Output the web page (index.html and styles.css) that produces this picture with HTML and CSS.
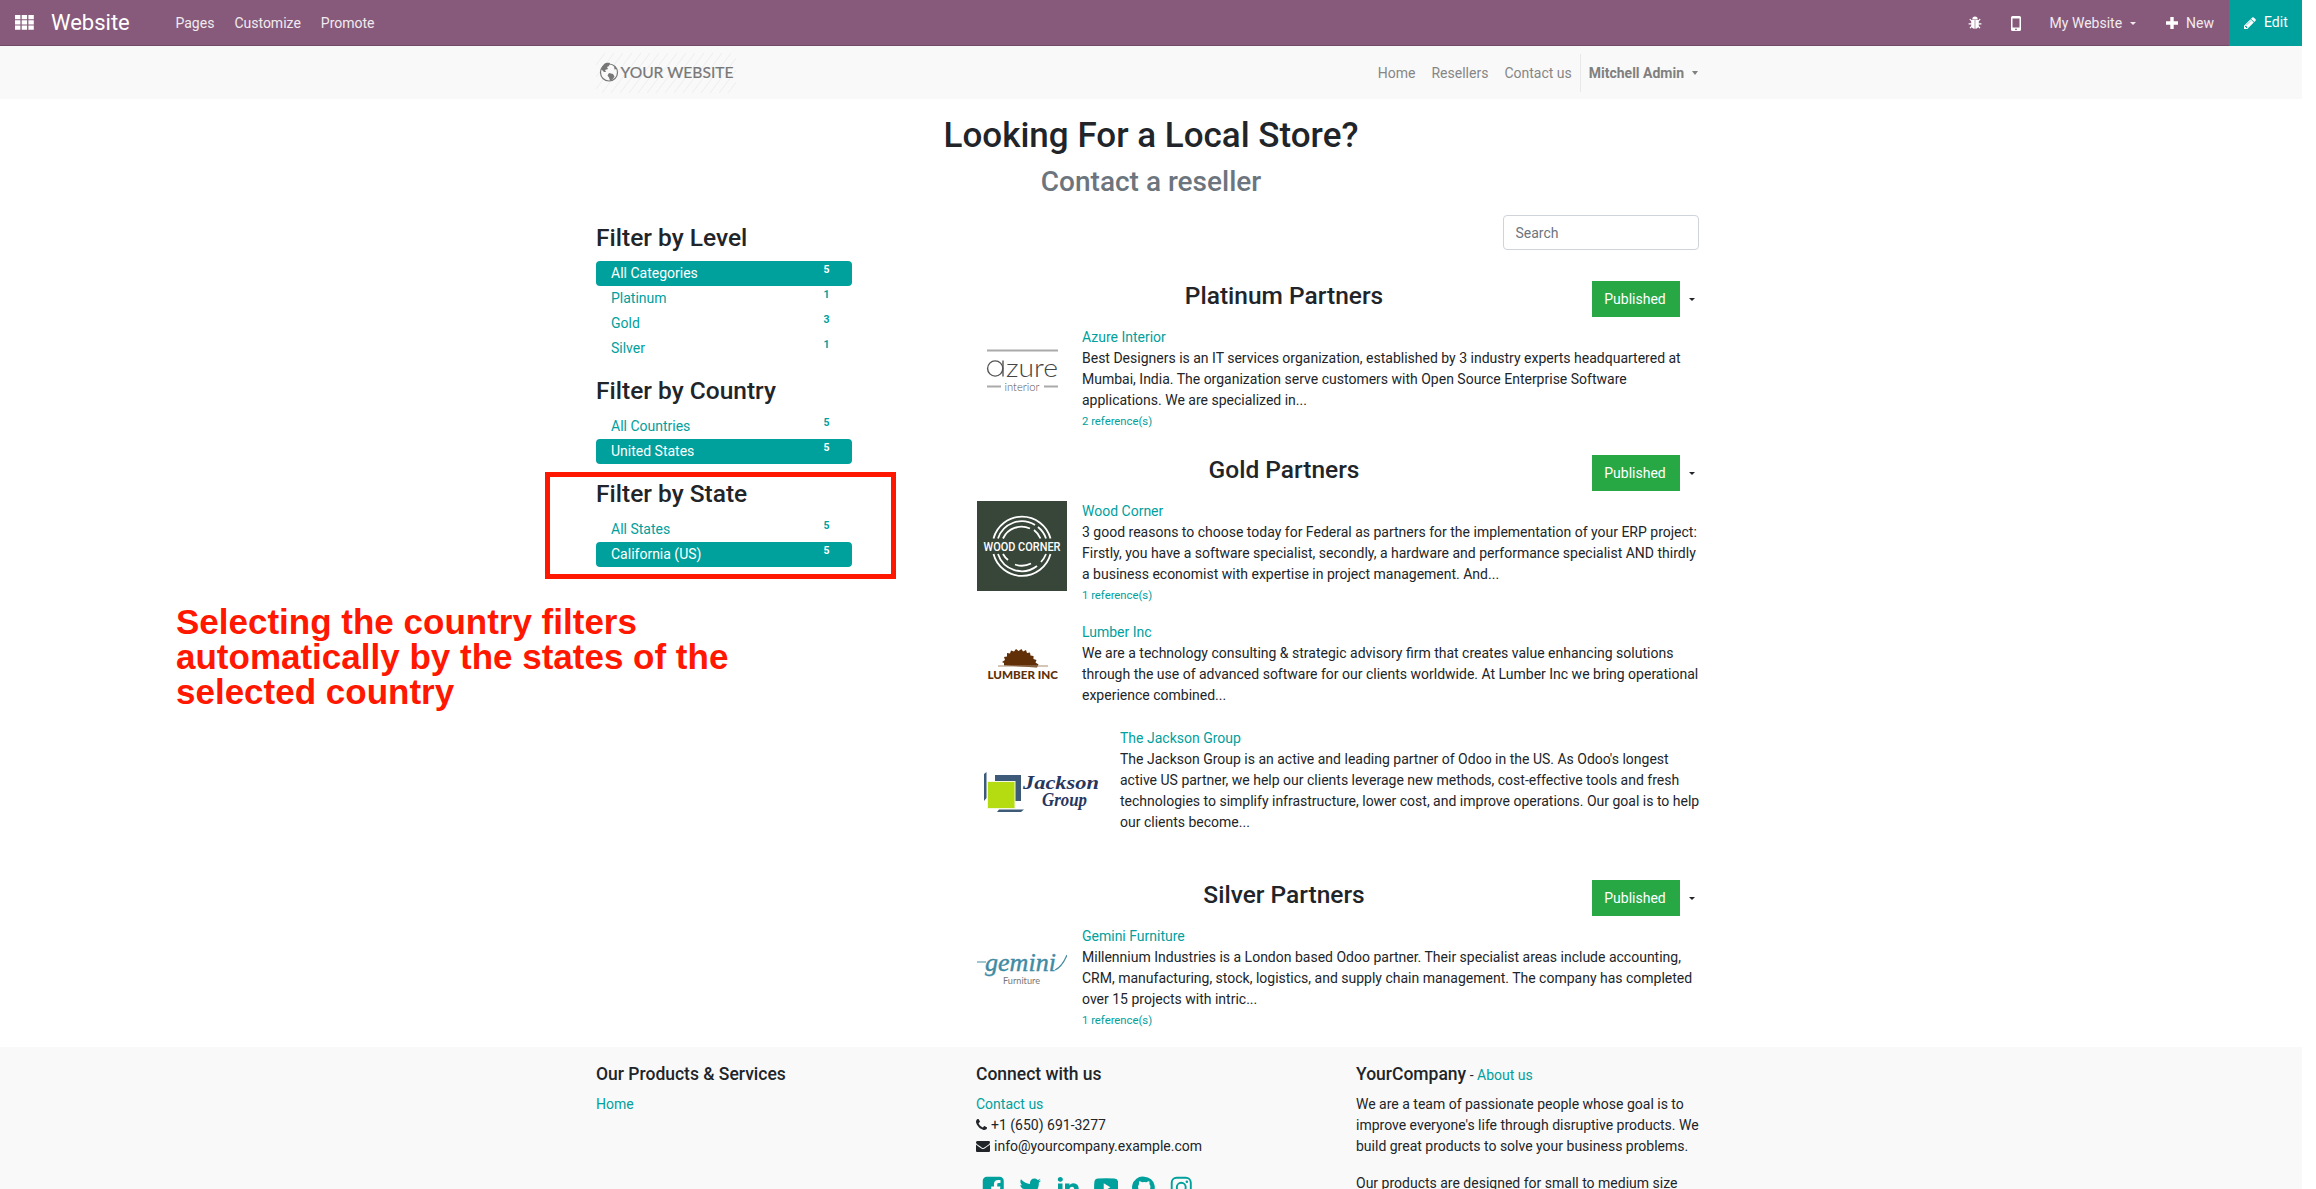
FILE: index.html
```html
<!DOCTYPE html>
<html lang="en">
<head>
<meta charset="utf-8">
<title>Resellers</title>
<link rel="stylesheet" href="styles.css">
</head>
<body>
<div class="page">
  <header class="topbar">
    <svg class="apps" viewBox="0 0 19 15"><path d="M0 0h5.4v4.2H0zM6.7 0h5.4v4.2H6.7zM13.4 0h5.4v4.2h-5.4zM0 5.3h5.4v4.2H0zM6.7 5.3h5.4v4.2H6.7zM13.4 5.3h5.4v4.2h-5.4zM0 10.6h5.4v4.2H0zM6.7 10.6h5.4v4.2H6.7zM13.4 10.6h5.4v4.2h-5.4z"/></svg>
    <span class="brand">Website</span>
    <nav class="menu"><a>Pages</a><a>Customize</a><a>Promote</a></nav>
    <div class="tools">
      <svg class="bug" viewBox="0 0 14 14"><path d="M4.300 3.400a2.700 2.800 0 0 1 5.400 0zM3.200 4h3.500v8.800C4.300 12.600 3.200 11 3.200 9zM7.300 4h3.500v5c0 2-1.100 3.600-3.500 3.800z"/><path d="M3.800 5.200L1.800 3.200M10.200 5.200l2-2M3.600 7.800H.6M10.400 7.800h3M4 10l-2 2.200M10 10l2 2.200" fill="none" stroke="#fff" stroke-width="1.200"/></svg>
      <svg class="mobile" viewBox="0 0 10 15"><path fill-rule="evenodd" d="M1.600 0h6.800A1.600 1.600 0 0 1 10 1.600v11.800A1.600 1.600 0 0 1 8.400 15H1.600A1.600 1.600 0 0 1 0 13.400V1.600A1.600 1.600 0 0 1 1.600 0zM1.500 2.400v9.200h7V2.400zM5 12.400a.9.9 0 1 0 0 1.800.9.900 0 0 0 0-1.800z"/></svg>
      <span class="site">My Website</span><i class="caret"></i>
      <svg class="plus" viewBox="0 0 12 12"><path d="M4.300 0h3.400v4.300H12v3.400H7.700V12H4.300V7.700H0V4.300h4.300z"/></svg>
      <span>New</span>
    </div>
    <a class="edit"><svg viewBox="0 0 1792 1792"><path d="M491 1536l91-91-235-235-91 91v107h128v128h107zm523-928q0-22-22-22-10 0-17 7l-542 542q-7 7-7 17 0 22 22 22 10 0 17-7l542-542q7-7 7-17zm-54-192l416 416-832 832h-416v-416zm683 96q0 53-37 90l-166 166-416-416 166-165q36-38 90-38 53 0 91 38l235 234q37 39 37 91z"/></svg>Edit</a>
  </header>

  <div class="sitenav">
    <div class="sitenav-inner">
      <svg class="sitelogo" viewBox="0 0 140 40">
        <defs><pattern id="hatch" width="9" height="12" patternUnits="userSpaceOnUse"><path d="M0 12L9 0" stroke="#ececec" stroke-width=".9"/></pattern></defs>
        <rect width="140" height="40" fill="url(#hatch)"/>
        <circle cx="13" cy="19.500" r="8.500" fill="#f9f9f9" stroke="#777" stroke-width="1.200"/>
        <path fill="#777" d="M6 14c2-4 4-5 8-4l-1 3-2 1 1 2-3 1 1 2-2 0-2-2-1-1zM13 20l4 1 1.500 2.500-2 3-2.500 1-1-3-1.500-2zM18 13l2.500 3-2 .5z"/>
        <text x="24.500" y="25.300" textLength="113" lengthAdjust="spacingAndGlyphs">YOUR WEBSITE</text>
      </svg>
      <nav class="links"><a>Home</a><a>Resellers</a><a>Contact us</a><a class="user">Mitchell Admin<i class="caret"></i></a></nav>
    </div>
  </div>

  <main class="container">
    <h1>Looking For a Local Store?</h1>
    <h2>Contact a reseller</h2>
    <div class="columns">
      <aside class="filters">
        <h3>Filter by Level</h3>
        <ul><li class="on">All Categories<b>5</b></li><li>Platinum<b>1</b></li><li>Gold<b>3</b></li><li>Silver<b>1</b></li></ul>
        <h3>Filter by Country</h3>
        <ul><li>All Countries<b>5</b></li><li class="on">United States<b>5</b></li></ul>
        <h3>Filter by State</h3>
        <ul><li>All States<b>5</b></li><li class="on">California (US)<b>5</b></li></ul>
      </aside>
      <section class="partners">
        <input class="search" type="text" placeholder="Search">

        <div class="level"><h3>Platinum Partners</h3><span class="published">Published</span><i class="caret"></i></div>
        <article class="partner">
          <svg class="logo" viewBox="0 0 90 90">
            <path d="M10 23.500h71M10 59.500h14M67 59.500h14" stroke="#aaa" stroke-width="1.800"/>
            <path d="M26 33.500v16" stroke="#555" stroke-width="1.400"/>
            <circle cx="18.200" cy="41.500" r="7.600" fill="none" stroke="#555" stroke-width="1.400"/>
            <text class="azure" x="29" y="49.500" textLength="52" lengthAdjust="spacingAndGlyphs">zure</text>
            <text class="azure-sub" x="27.500" y="63.500" textLength="35" lengthAdjust="spacingAndGlyphs">interior</text>
          </svg>
          <div class="info"><a>Azure Interior</a><p>Best Designers is an IT services organization, established by 3 industry experts headquartered at Mumbai, India. The organization serve customers with Open Source Enterprise Software applications. We are specialized in...</p><a class="ref">2 reference(s)</a></div>
        </article>

        <div class="level"><h3>Gold Partners</h3><span class="published">Published</span><i class="caret"></i></div>
        <article class="partner">
          <svg class="logo" viewBox="0 0 90 90">
            <rect width="90" height="90" fill="#374638"/>
            <g fill="none" stroke="#fff" stroke-width="1.800">
              <path d="M16.500 37.500a29.500 29.500 0 0 1 57 0M16.500 53a29.500 29.500 0 0 0 57 0"/>
              <path d="M21 37.500a25 25 0 0 1 37-13.500M61 26a25 25 0 0 1 8 11.500M21 53a25 25 0 0 0 39 12M64 61a25 25 0 0 0 5-8"/>
              <path d="M26 37.500a20.500 20.500 0 0 1 27-10M57 29a20.500 20.500 0 0 1 6.500 8.500M26 53a20.500 20.500 0 0 0 5 6M38 63.500a20.500 20.500 0 0 0 16-1"/>
            </g>
            <text class="wood" x="6.500" y="50" textLength="77" lengthAdjust="spacingAndGlyphs">WOOD CORNER</text>
          </svg>
          <div class="info"><a>Wood Corner</a><p>3 good reasons to choose today for Federal as partners for the implementation of your ERP project: Firstly, you have a software specialist, secondly, a hardware and performance specialist AND thirdly a business economist with expertise in project management. And...</p><a class="ref">1 reference(s)</a></div>
        </article>
        <article class="partner">
          <svg class="logo" viewBox="0 0 90 90">
            <path fill="#613009" d="M27 43.500l0-2.500-2-1 3-2-1-3 3-.5 0-3.500 3 .5 1-3 3 1 2-2.500 2.500 2 3-2 1.500 2.500 3-1.500 1 3 3-.5.500 3 3 .5 0 3 3 1-1 2.500 3 2-1.500 3z"/>
            <path d="M21 44h50" stroke="#a98b70" stroke-width="1"/>
            <text class="lumber" x="10.500" y="56.500" textLength="70.500" lengthAdjust="spacingAndGlyphs">LUMBER INC</text>
          </svg>
          <div class="info"><a>Lumber Inc</a><p>We are a technology consulting &amp; strategic advisory firm that creates value enhancing solutions through the use of advanced software for our clients worldwide. At Lumber Inc we bring operational experience combined...</p></div>
        </article>
        <article class="partner tall">
          <svg class="logo wide" viewBox="0 0 128 105">
            <path fill="#3d5b79" d="M7 46l2.500-2v26L7 73zM18 47h26v26H18zM20 84l2-2.500h25l-3 2.500z"/>
            <rect x="10.500" y="53.500" width="27.500" height="27" fill="#b5dc10" stroke="#f5f9dc" stroke-width="1"/>
            <text class="jackson" x="46" y="61" textLength="76" lengthAdjust="spacingAndGlyphs">Jackson</text>
            <text class="jackson" x="65" y="78" textLength="45" lengthAdjust="spacingAndGlyphs">Group</text>
          </svg>
          <div class="info"><a>The Jackson Group</a><p>The Jackson Group is an active and leading partner of Odoo in the US. As Odoo's longest active US partner, we help our clients leverage new methods, cost-effective tools and fresh technologies to simplify infrastructure, lower cost, and improve operations. Our goal is to help our clients become...</p></div>
        </article>

        <div class="level"><h3>Silver Partners</h3><span class="published">Published</span><i class="caret"></i></div>
        <article class="partner">
          <svg class="logo" viewBox="0 0 90 90">
            <path d="M0 36h9M78 44q7-3 12-15" fill="none" stroke="#3f8ba3" stroke-width="1.200"/>
            <text class="gemini" x="8" y="45" textLength="71" lengthAdjust="spacingAndGlyphs">gemini</text>
            <text class="gemini-sub" x="26" y="57.500" textLength="37" lengthAdjust="spacingAndGlyphs">Furniture</text>
          </svg>
          <div class="info"><a>Gemini Furniture</a><p>Millennium Industries is a London based Odoo partner. Their specialist areas include accounting, CRM, manufacturing, stock, logistics, and supply chain management. The company has completed over 15 projects with intric...</p><a class="ref">1 reference(s)</a></div>
        </article>
      </section>
    </div>
  </main>

  <footer class="footer">
    <div class="footer-inner">
      <div><h5>Our Products &amp; Services</h5><a>Home</a></div>
      <div><h5>Connect with us</h5>
        <a>Contact us</a>
        <p class="line"><svg class="phone" viewBox="192 128 1408 1536"><path d="M1600 1240q0 27-10 70.500t-21 68.500q-21 50-122 106-94 51-186 51-27 0-53-3.500t-57.500-12.500-47-14.500-55.500-20.500-49-18q-98-35-175-83-127-79-264-216t-216-264q-48-77-83-175-3-9-18-49t-20.500-55.500-14.500-47-12.500-57.500-3.500-53q0-92 51-186 56-101 106-122 25-11 68.500-21t70.500-10q14 0 21 3 18 6 53 76 11 19 30 54t35 63.500 31 53.500q3 4 17.500 25t21.500 35.500 7 28.500q0 20-28.500 50t-62 55-62 53-28.500 46q0 9 5 22.500t8.500 20.500 14 24 11.500 19q76 137 174 235t235 174q2 1 19 11.500t24 14 20.500 8.500 22.500 5q18 0 46-28.500t53-62 55-62 50-28.500q14 0 28.500 7t35.500 21.500 25 17.500q25 15 53.500 31t63.500 35 54 30q70 35 76 53 3 7 3 21z"/></svg>+1 (650) 691-3277</p>
        <p class="line"><svg class="mail" viewBox="0 128 1792 1664"><path d="M1792 710v794q0 66-47 113t-113 47h-1472q-66 0-113-47t-47-113v-794q44 49 101 87 362 246 497 345 57 42 92.500 65.500t94.500 48 110 24.500h2q51 0 110-24.500t94.500-48 92.500-65.500q170-123 498-345 57-39 100-87zm0-294q0 79-49 151t-122 123q-376 261-468 325-10 7-42.500 31t-54 38.500-52 32.500-57.500 27-50 9h-2q-23 0-50-9t-57.500-27-52-32.500-54-38.500-42.500-31q-91-64-262-182.500t-205-142.500q-62-42-117-115.500t-55-136.500q0-78 41.500-130t118.500-52h1472q65 0 112.500 47t47.500 113z"/></svg>info@yourcompany.example.com</p>
        <div class="social">
          <svg viewBox="0 0 1792 1792"><path d="M1376 128q119 0 203.500 84.500t84.500 203.500v960q0 119-84.500 203.500t-203.500 84.500h-188v-595h199l30-232h-229v-148q0-56 23.500-84t91.500-28l122-1v-207q-63-9-178-9-136 0-217.500 80t-81.500 226v171h-200v232h200v595h-532q-119 0-203.500-84.500t-84.500-203.500v-960q0-119 84.500-203.500t203.500-84.500h960z"/></svg>
          <svg viewBox="0 0 1792 1792"><path d="M1684 408q-67 98-162 167 1 14 1 42 0 130-38 259.500t-115.500 248.500-184.500 210.500-258 146-323 54.500q-271 0-496-145 35 4 78 4 225 0 401-138-105-2-188-64.500t-114-159.500q33 5 61 5 43 0 85-11-112-23-185.500-111.500t-73.500-205.500v-4q68 38 146 41-66-44-105-115t-39-154q0-88 44-163 121 149 294.500 238.500t371.500 99.500q-8-38-8-74 0-134 94.500-228.500t228.500-94.500q140 0 236 102 109-21 205-78-37 115-142 178 93-10 186-50z"/></svg>
          <svg viewBox="0 0 1792 1792"><path d="M477 625v991h-330v-991h330zm21-306q1 73-50.500 122t-135.500 49h-2q-82 0-132-49t-50-122q0-74 51.500-122.500t134.500-48.500 133 48.500 51 122.500zm1166 729v568h-329v-530q0-105-40.500-164.500t-126.500-59.500q-63 0-105.500 34.500t-63.500 85.500q-11 30-11 81v553h-329q2-399 2-647t-1-296l-1-48h329v144h-2q20-32 41-56t56.500-52 87-43.500 114.500-15.500q171 0 275 113.500t104 332.500z"/></svg>
          <svg viewBox="0 0 1792 1792"><path fill-rule="evenodd" d="M300 260Q896 210 1492 260Q1720 270 1760 480Q1810 896 1760 1312Q1720 1520 1492 1532Q896 1580 300 1532Q72 1520 32 1312Q-18 896 32 480Q72 270 300 260zM711 610v580l484-290z"/></svg>
          <svg viewBox="0 0 1792 1792"><path fill-rule="evenodd" d="M896 128a768 768 0 0 1 243 1497q-51 9-51-37v-211q0-97-52-142 311-35 311-375 0-129-79-206 34-87-8-203-70-14-211 79-153-42-306 0-141-93-211-79-42 116-8 203-79 77-79 206 0 340 311 375-40 35-49 102-158 70-228-51-45-76-120-80-55 0 0 43 50 25 90 130 55 145 255 105v131q0 46-51 37A768 768 0 0 1 896 128z"/></svg>
          <svg viewBox="0 0 1792 1792"><g fill="none" stroke="#00a09d" stroke-width="140"><rect x="198" y="198" width="1396" height="1396" rx="360"/><circle cx="896" cy="896" r="325"/></g><circle cx="1306" cy="486" r="92"/></svg>
        </div>
      </div>
      <div><h5>YourCompany<small> - <a>About us</a></small></h5><p>We are a team of passionate people whose goal is to improve everyone's life through disruptive products. We build great products to solve your business problems.</p><p>Our products are designed for small to medium size</p></div>
    </div>
  </footer>
</div>
<div class="callout-box"></div>
<div class="callout-text">Selecting the country filters<br>automatically by the states of the<br>selected country</div>
</body>
</html>
```
FILE: styles.css
```css
* { box-sizing: border-box; }
html, body { margin: 0; height: 1189px; overflow: hidden; background: #fff; }
body { position: relative; font: 14px/21px Roboto, sans-serif; color: #212529; }
h1, h2, h3, h5, p, ul { margin: 0; padding: 0; }
h1, h2, h3, h5 { font-weight: 500; line-height: 1.2; }
a { color: #00a09d; }
svg { display: block; flex: none; }
.page { width: 2302px; height: 1189px; overflow: hidden; }
.caret { display: inline-block; border: 4px solid transparent; border-top-color: currentColor; border-bottom: 0; }

.topbar { height: 46px; background: #875a7b; border-bottom: 1px solid #714b67; display: flex; align-items: center; color: #fff; fill: #fff; }
.apps { width: 19px; height: 15px; margin-left: 15px; }
.brand { font-size: 22px; margin-left: 17px; width: 124.500px; }
.menu { display: flex; gap: 20px; }
.menu a, .tools { color: #f1ebef; padding-top: 1px; }
.tools { display: flex; align-items: center; margin-left: auto; margin-right: 15px; }
.bug { width: 14px; height: 14px; margin-right: 29px; }
.mobile { width: 10px; height: 15px; margin-right: 29px; }
.tools .caret { border-width: 3px 3px 0; margin: 0 30px 0 8px; }
.plus { width: 12px; height: 12px; margin-right: 8px; }
.edit { height: 46px; width: 73px; background: #00a09d; color: #fff; display: flex; align-items: center; padding-left: 14px; gap: 7px; }
.edit svg { width: 14px; height: 14px; }

.sitenav { height: 53px; background: #f9f9f9; }
.sitenav-inner { width: 1110px; margin: 0 auto; height: 53px; display: flex; align-items: center; justify-content: space-between; }
.sitelogo { width: 140px; height: 40px; }
.sitelogo text { font: 15.500px Lato, sans-serif; fill: #777; stroke: #777; stroke-width: .2; }
.links { display: flex; align-items: center; padding: 1px 8px 0 0; }
.links a { color: #868686; margin-right: 16px; }
.links a:nth-child(3) { margin-right: 8px; }
.links .user { font-weight: 700; border-left: 1px solid #e8e8e8; padding-left: 8px; margin: 0; height: 38px; line-height: 38px; color: #808080; }
.user .caret { margin-left: 8px; vertical-align: 3px; border-width: 4px 3.500px 0; }

.container { width: 1110px; margin: 0 auto; height: 947.500px; padding-top: 16px; }
h1 { font-size: 35px; text-align: center; height: 50px; }
h2 { font-size: 28px; text-align: center; color: #6c757d; height: 50px; }
h3 { font-size: 24.500px; }
.columns { display: flex; justify-content: space-between; }
.filters { width: 255.500px; padding-top: 8px; }
.filters h3 { height: 37.500px; }
.filters ul { list-style: none; margin-bottom: 15px; }
.filters li { height: 25px; line-height: 25px; padding: 0 22px 0 15px; display: flex; justify-content: space-between; color: #00a09d; }
.filters h3:nth-of-type(n+2) { height: 38px; }
.filters li.on { background: #00a09d; color: #fff; border-radius: 4px; }
.filters b { font-size: 10.500px; line-height: 18px; }

.partners { width: 729.500px; padding-right: 7.500px; }
.search { display: block; width: 196px; height: 35px; margin: 0 0 31px auto; border: 1px solid #ced4da; border-radius: 4px; padding: 0 12px; font: 14px Roboto, sans-serif; }
.search::placeholder { color: #6c757d; opacity: 1; }
.level { display: flex; align-items: flex-start; height: 46px; }
.level h3 { flex: 1; text-align: center; }
.published { width: 88px; height: 36px; line-height: 36px; background: #28a745; color: #fff; text-align: center; padding-right: 1px; }
.level .caret { margin: 17px 4px 0 9px; border-width: 3.500px 3.500px 0; }
.partner { display: flex; gap: 15.500px; min-height: 90px; margin-bottom: 16px; }
.partner:has(+ .level) { margin-bottom: 23px; }
.partner.tall { margin-bottom: 46.500px; }
.logo { width: 90px; height: 90px; }
.logo.wide { width: 128px; height: 105px; }
.info { flex: 1; margin-right: -3.500px; }
.info > a { display: block; }
.info .ref { font-size: 11.300px; height: 21px; line-height: 22.500px; }
.azure { font: 300 26px Lato, sans-serif; fill: #444; }
.azure-sub { font: 300 12px Lato, sans-serif; fill: #555; }
.wood { font: 500 12px Roboto, sans-serif; fill: #fff; }
.lumber { font: 900 12px Lato, sans-serif; fill: #613009; }
.jackson { font: italic 700 19px "Liberation Serif", serif; fill: #27375e; }
.gemini { font: italic 25px "Liberation Serif", serif; fill: #3f8ba3; stroke: #3f8ba3; stroke-width: .4; }
.gemini-sub { font: 400 9.500px Lato, sans-serif; fill: #777; }

.footer { height: 142.500px; background: #f9f9f9; padding-top: 17px; }
.footer-inner { width: 1140px; margin: 0 auto; padding: 0 15px; display: flex; }
.footer-inner > div { width: 380px; flex: none; }
.footer-inner > div:last-child { width: 348px; }
h5 { font-size: 17.500px; height: 30px; }
h5 small { font-size: 14px; font-weight: 400; }
.footer p { margin-bottom: 16px; }
.footer .line { margin: 0; display: flex; align-items: center; }
.phone { width: 11px; height: 12px; margin-right: 4px; fill: #212529; }
.mail { width: 14px; height: 13px; margin-right: 4px; fill: #212529; }
.social { display: flex; gap: 13.300px; margin: 18px 0 0 4.500px; fill: #00a09d; }
.social svg { width: 24.500px; height: 24.500px; }

.callout-box { position: absolute; left: 545px; top: 472px; width: 351px; height: 107px; border: 5px solid #ff1700; }
.callout-text { position: absolute; left: 176px; top: 604px; font: 700 35px/35.200px "Liberation Sans", sans-serif; color: #ff1700; white-space: nowrap; }
```
